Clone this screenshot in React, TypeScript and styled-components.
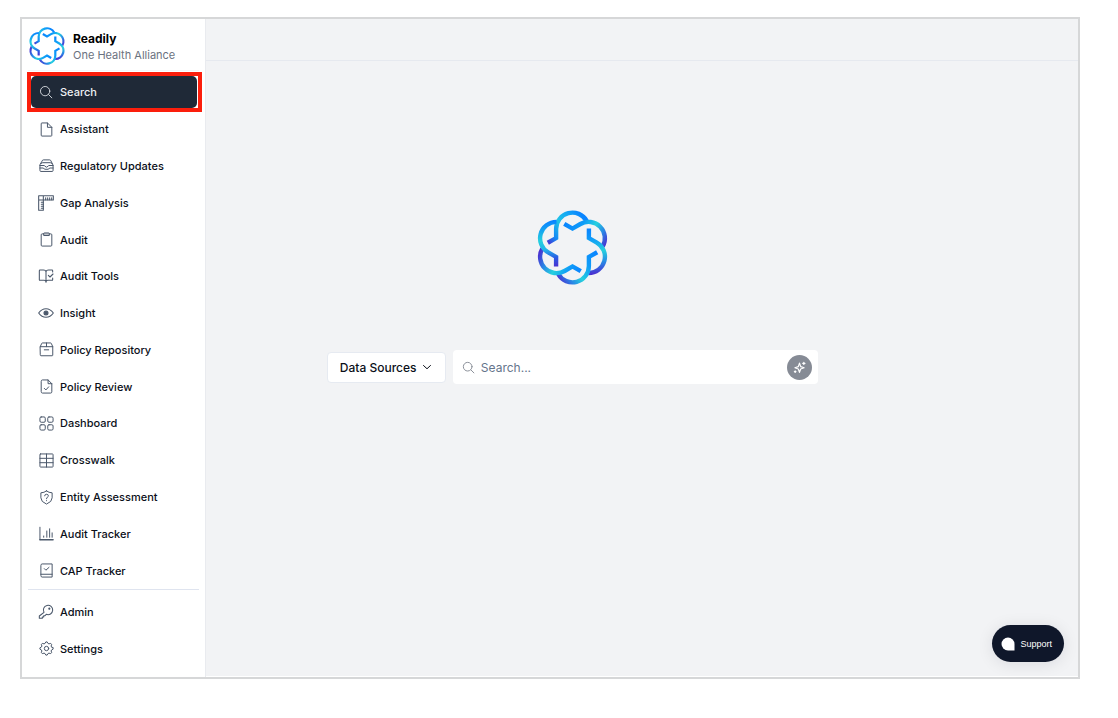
import React from "react";
import styled, { createGlobalStyle } from "styled-components";

const GlobalStyle = createGlobalStyle`
  *, *::before, *::after { box-sizing: border-box; }
  body {
    margin: 0;
    background: #ffffff;
    color: #0b0f19;
    font-family: Inter, "Liberation Sans", sans-serif;
    -webkit-font-smoothing: antialiased;
  }
  button, input { font-family: inherit; }
`;

const Page = styled.div`
  display: flex;
  min-height: 100vh;
  padding: 17px 38px 39px 20px;
`;

const Frame = styled.div`
  position: relative;
  flex: 1;
  display: flex;
  border: 2px solid #d6d7d8;
  background: #ffffff;
`;

const Sidebar = styled.aside`
  display: flex;
  flex-direction: column;
  flex: 0 0 184px;
  border-right: 1px solid #e9ebef;
  background: #ffffff;
`;

const Brand = styled.header`
  display: flex;
  align-items: center;
  gap: 8px;
  height: 52px;
  margin: 0 6px;
  padding: 3px 0 0 1px;
  border-bottom: 1px solid #f5f6f8;
`;

const BrandText = styled.div`
  display: flex;
  flex-direction: column;
  padding-top: 2px;
`;

const BrandName = styled.strong`
  font-size: 12px;
  line-height: 16px;
  font-weight: 700;
  color: #000000;
`;

const BrandOrg = styled.span`
  font-size: 11px;
  line-height: 16px;
  color: #6b7280;
`;

const Nav = styled.nav`
  display: flex;
  flex-direction: column;
  flex: 1;
  padding-top: 3px;
`;

const NavList = styled.ul<{ $grow?: boolean }>`
  display: grid;
  grid-auto-rows: ${(p) => (p.$grow ? "1fr" : "37px")};
  align-items: center;
  flex: ${(p) => (p.$grow ? 1 : "none")};
  margin: 0;
  padding: 0 7px 0 9px;
  list-style: none;
`;

const NavDivider = styled.hr`
  width: auto;
  height: 1px;
  margin: 0 6px 3px;
  border: 0;
  background: #dfe4ef;
`;

const NavFoot = styled.div`
  padding-bottom: 10px;
`;

const NavItem = styled.li<{ $active?: boolean }>`
  height: 32px;
  padding-right: 1px;
  outline: ${(p) => (p.$active ? "4px solid #fb1e0c" : "none")};
`;

const NavLink = styled.a<{ $active?: boolean }>`
  display: flex;
  align-items: center;
  gap: 6px;
  height: 32px;
  padding: 0 7px;
  border-radius: 5px;
  background: ${(p) => (p.$active ? "#1f2937" : "transparent")};
  color: ${(p) => (p.$active ? "#eef0f3" : "#0b0f19")};
  font-size: 11px;
  font-weight: 500;
  text-decoration: none;
  white-space: nowrap;

  svg { color: ${(p) => (p.$active ? "#d5d9df" : "#4b586b")}; }
`;

const IconSlot = styled.span`
  display: grid;
  place-items: center;
  flex: 0 0 16px;
`;

const Main = styled.main`
  display: flex;
  flex-direction: column;
  flex: 1;
  min-width: 0;
  margin-bottom: 1px;
  background: #f2f3f5;
`;

const TopBar = styled.div`
  height: 42px;
  border-bottom: 1px solid #e6e9ef;
`;

const Hero = styled.section`
  display: flex;
  flex-direction: column;
  align-items: center;
  gap: 65px;
  padding: 149px 16% 0 0;
`;

const SearchForm = styled.form`
  display: flex;
  align-items: center;
  gap: 7px;
  width: 67%;
  min-width: 400px;
`;

const SourcesButton = styled.button`
  display: flex;
  align-items: center;
  justify-content: space-between;
  flex: 0 0 119px;
  height: 31px;
  padding: 0 12px;
  border: 1px solid #e6eaf1;
  border-radius: 4px;
  background: #ffffff;
  color: #0b0f19;
  font-size: 12px;
  font-weight: 500;
  white-space: nowrap;
`;

const SearchField = styled.label`
  display: flex;
  align-items: center;
  gap: 6px;
  flex: 1;
  min-width: 0;
  height: 34px;
  padding: 0 6px 0 9px;
  border-radius: 4px;
  background: #ffffff;
  color: #8a8f98;
`;

const SearchInput = styled.input`
  flex: 1;
  min-width: 0;
  padding: 0;
  border: 0;
  outline: 0;
  background: transparent;
  color: #0b0f19;
  font-size: 12px;

  &::placeholder { color: #64748b; opacity: 1; }
`;

const SparkleButton = styled.button`
  display: grid;
  place-items: center;
  width: 25px;
  height: 25px;
  padding: 0;
  border: 0;
  border-radius: 50%;
  background: #868b95;
  color: #ffffff;
`;

const SupportButton = styled.button`
  position: absolute;
  right: 14px;
  bottom: 15px;
  display: flex;
  align-items: center;
  gap: 5px;
  height: 37px;
  padding: 0 12px 0 9px;
  border: 0;
  border-radius: 19px;
  background: #0f172a;
  color: #ffffff;
  font-family: "Liberation Sans", Arial, sans-serif;
  font-size: 9px;
  box-shadow: 0 2px 16px rgba(15, 23, 42, 0.1);
`;

const STRANDS = [
  { x1: 84, y1: 135, x2: 190, y2: 55, stops: ["0 #4a2fd0", "0.22 #1488f5", "0.5 #22c4e6", "0.75 #14a8f4", "1 #0a84ff"] },
  { x1: 131, y1: 72, x2: 254, y2: 140, stops: ["0 #0a84ff", "0.35 #0f9cf8", "0.6 #26d0de", "0.8 #2888e6", "1 #4a2fd0"] },
  { x1: 205, y1: 88, x2: 215, y2: 222, stops: ["0 #0a84ff", "0.2 #0f98fa", "0.5 #26d0de", "0.75 #2888e6", "1 #4a2fd0"] },
  { x1: 228, y1: 158, x2: 113, y2: 240, stops: ["0 #0a84ff", "0.3 #0f9cf8", "0.58 #26d0de", "0.78 #2888e6", "1 #4a2fd0"] },
  { x1: 181, y1: 210, x2: 58, y2: 155, stops: ["0 #0a84ff", "0.25 #0f9cf8", "0.55 #26d0de", "0.78 #2888e6", "1 #4a2fd0"] },
  { x1: 107, y1: 200, x2: 90, y2: 66, stops: ["0 #4a2fd0", "0.2 #2a5ce4", "0.4 #22b4ea", "0.6 #26d0de", "1 #0a84ff"] },
];

const CENTER = { x: 156, y: 143 };

function point(x: number, y: number, turns: number) {
  const a = (turns * Math.PI) / 3;
  const dx = x - CENTER.x;
  const dy = y - CENTER.y;
  const px = CENTER.x + dx * Math.cos(a) - dy * Math.sin(a);
  const py = CENTER.y + dx * Math.sin(a) + dy * Math.cos(a);
  return `${px.toFixed(1)} ${py.toFixed(1)}`;
}

function strandPath(turns: number) {
  const p = (x: number, y: number) => point(x, y, turns);
  return `M${p(83, 129)}L${p(107.5, 115)}L${p(107.5, 88)}A48.5 48.5 0 0 1 ${p(198, 64)}`;
}

function Logo({ id, width, height }: { id: string; width: number; height: number }) {
  return (
    <svg width={width} height={height} viewBox="51 32 210 222" role="img" aria-label="Readily">
      <defs>
        {STRANDS.map((s, i) => (
          <linearGradient key={i} id={`${id}-${i}`} gradientUnits="userSpaceOnUse" x1={s.x1} y1={s.y1} x2={s.x2} y2={s.y2}>
            {s.stops.map((stop) => {
              const [offset, color] = stop.split(" ");
              return <stop key={stop} offset={offset} stopColor={color} />;
            })}
          </linearGradient>
        ))}
      </defs>
      {STRANDS.map((_, i) => (
        <path key={i} d={strandPath(i)} fill="none" stroke={`url(#${id}-${i})`} strokeWidth="13" />
      ))}
    </svg>
  );
}

function Icon({ children, size = 16, weight = 1.6 }: { children: React.ReactNode; size?: number; weight?: number }) {
  return (
    <svg
      width={size}
      height={size}
      viewBox="0 0 24 24"
      fill="none"
      stroke="currentColor"
      strokeWidth={weight}
      strokeLinecap="round"
      strokeLinejoin="round"
      aria-hidden="true"
    >
      {children}
    </svg>
  );
}

const magnifier = (
  <>
    <circle cx="10.500" cy="10.500" r="8" />
    <path d="M16.400 16.400 22 22" />
  </>
);

interface Item {
  label: string;
  icon: React.ReactNode;
  size?: number;
}

const MAIN_ITEMS: Item[] = [
  { label: "Search", size: 14, icon: magnifier },
  {
    label: "Assistant",
    size: 15,
    icon: <path d="M3.500 2.500a1 1 0 0 1 1-1h9l7 7V21.500a1 1 0 0 1-1 1h-15a1 1 0 0 1-1-1zM13.500 1.500v7h7" />,
  },
  {
    label: "Regulatory Updates",
    size: 15,
    icon: (
      <>
        <path d="M1.500 11.500v8.500a1.500 1.500 0 0 0 1.500 1.500h18a1.500 1.500 0 0 0 1.500-1.500v-8.500L19 4.500q-.5-1.500-2-1.500H7q-1.500 0-2 1.500z" />
        <path d="M1.500 12h6.500q1 0 1.500 1.200 2.500 3 5 0 .5-1.200 1.500-1.200h6.500M3 9Q3.500 7.500 6 7.500h12q2.500 0 3 1.500M1.500 16h5l3 2h5l3-2h5" />
      </>
    ),
  },
  {
    label: "Gap Analysis",
    icon: (
      <>
        <path d="M1 1h22v6.500H8v15.500H1zM8 7.500V1M1 7.500h7" />
        <path d="M11.500 4v3M14.500 4v3M17.500 4v3M20.500 4v3M5 11h3M5 14h3M5 17h3M5 20h3" />
      </>
    ),
  },
  {
    label: "Audit",
    size: 15,
    icon: (
      <>
        <path d="M7.500 3H5Q3.500 3 3.500 4.500v16.500Q3.500 22.500 5 22.500h14q1.500 0 1.500-1.500V4.500Q20.500 3 19 3h-2.500" />
        <path d="M7.500 5V2.500Q7.500 1.500 8.500 1.500h7q1 0 1 1V5z" fill="currentColor" fillOpacity=".35" />
      </>
    ),
  },
  {
    label: "Audit Tools",
    icon: (
      <path d="M12 5.500v16M22 6V4q0-1-1-1h-5q-4 0-4 3Q12 3 8 3H3Q2 3 2 4v13.500q0 1 1 1h6q3 0 3 3 0-3 3-3h6q1 0 1-1V15M15.500 11l2.500 2.500 4.500-4.500" />
    ),
  },
  {
    label: "Insight",
    icon: (
      <>
        <path d="M1 12Q5.500 5.500 12 5.500t11 6.500q-4.500 6.500-11 6.500T1 12z" />
        <circle cx="12" cy="12" r="3" fill="currentColor" />
      </>
    ),
  },
  {
    label: "Policy Repository",
    size: 15,
    icon: <path d="M2 7.500 4 3q.4-1.500 1.500-1.500h13q1.100 0 1.500 1.500l2 4.500v13.500q0 1-1 1H3q-1 0-1-1zM2 7.500h20M12 1.500v6M8.500 12.500h7" />,
  },
  {
    label: "Policy Review",
    size: 15,
    icon: <path d="M3.500 3.500q0-2 2-2h9l6 6V20.500q0 2-2 2h-13q-2 0-2-2zM14.500 1.500v6h6M8.500 15l2.500 2.500 4.500-5" />,
  },
  {
    label: "Dashboard",
    size: 15,
    icon: (
      <>
        <rect x="1.500" y="1.500" width="8.500" height="8.500" rx="2" />
        <rect x="14" y="1.500" width="8.500" height="8.500" rx="2" />
        <rect x="1.500" y="14" width="8.500" height="8.500" rx="2" />
        <rect x="14" y="14" width="8.500" height="8.500" rx="2" />
      </>
    ),
  },
  {
    label: "Crosswalk",
    size: 15,
    icon: (
      <>
        <rect x="1.500" y="1.500" width="21" height="21" rx="1" />
        <path d="M1.500 8.500h21M1.500 15.500h21M12 1.500v21" />
      </>
    ),
  },
  {
    label: "Entity Assessment",
    size: 15,
    icon: (
      <>
        <path d="M12 1.500q4 3 9 3v8q0 6.500-9 10-9-3.500-9-10v-8q5 0 9-3z" />
        <path d="M9 9.300Q9.200 6.800 12 6.800t3 2.500q0 1.300-1.600 2.300T12 14M12 17v.2" />
      </>
    ),
  },
  {
    label: "Audit Tracker",
    size: 15,
    icon: (
      <>
        <path d="M1.500 2v20M7.500 18v-2M12.500 18V8M17 18V4.500M21 18v-7" />
        <path d="M1.500 22H22.500" strokeWidth="2.400" />
      </>
    ),
  },
  {
    label: "CAP Tracker",
    size: 15,
    icon: <path d="M3 3.500q0-2 2-2h16v21H5q-2 0-2-2zM3 18h18M8.500 9l2.500 2.500 5-4.500" />,
  },
];

const gear = Array.from({ length: 32 }, (_, i) => {
  const angle = ((i - 0.5) / 32) * Math.PI * 2;
  const radius = i % 4 < 2 ? 10.6 : 8.4;
  return `${i ? "L" : "M"}${(12 + radius * Math.cos(angle)).toFixed(2)} ${(12 + radius * Math.sin(angle)).toFixed(2)}`;
}).join("");

const FOOT_ITEMS: Item[] = [
  {
    label: "Admin",
    icon: (
      <>
        <path d="M9 12.500A7 7 0 1 1 12.500 15.500L10.500 17.500H8.500v2H6.500v2H2v-3.500z" />
        <circle cx="17" cy="7" r=".8" fill="currentColor" />
      </>
    ),
  },
  {
    label: "Settings",
    size: 15,
    icon: (
      <>
        <path d={`${gear}Z`} />
        <circle cx="12" cy="12" r="3.500" />
      </>
    ),
  },
];

function Entry({ label, icon, size, active }: Item & { active?: boolean }) {
  return (
    <NavItem $active={active}>
      <NavLink href="#" $active={active} aria-current={active ? "page" : undefined}>
        <IconSlot>
          <Icon size={size}>{icon}</Icon>
        </IconSlot>
        {label}
      </NavLink>
    </NavItem>
  );
}

export default function App() {
  return (
    <Page>
      <GlobalStyle />
      <Frame>
        <Sidebar>
          <Brand>
            <Logo id="brand" width={36} height={38} />
            <BrandText>
              <BrandName>Readily</BrandName>
              <BrandOrg>One Health Alliance</BrandOrg>
            </BrandText>
          </Brand>
          <Nav aria-label="Main">
            <NavList $grow>
              {MAIN_ITEMS.map((item, i) => (
                <Entry key={item.label} {...item} active={i === 0} />
              ))}
            </NavList>
            <NavDivider />
            <NavFoot>
              <NavList>
                {FOOT_ITEMS.map((item) => (
                  <Entry key={item.label} {...item} />
                ))}
              </NavList>
            </NavFoot>
          </Nav>
        </Sidebar>
        <Main>
          <TopBar />
          <Hero>
            <Logo id="hero" width={71} height={75} />
            <SearchForm onSubmit={(e) => e.preventDefault()}>
              <SourcesButton type="button" aria-haspopup="listbox">
                Data Sources
                <Icon size={12} weight={2}>
                  <path d="M5 9l7 6.500L19 9" />
                </Icon>
              </SourcesButton>
              <SearchField>
                <Icon size={13} weight={1.8}>{magnifier}</Icon>
                <SearchInput type="text" placeholder="Search..." aria-label="Search" />
                <SparkleButton type="submit" aria-label="Ask with AI">
                  <Icon size={13} weight={2.2}>
                    <path d="M12 4l2.200 6.300L20.500 12.500l-6.300 2.200L12 21l-2.200-6.300L3.500 12.500l6.300-2.200z" />
                    <path d="M20 2.500v4M18 4.500h4M4 18v3M2.500 19.500h3" />
                  </Icon>
                </SparkleButton>
              </SearchField>
            </SearchForm>
          </Hero>
        </Main>
        <SupportButton type="button">
          <svg width="14" height="14" viewBox="0 0 14 14" aria-hidden="true">
            <path d="M7 .5A6.500 6.500 0 0 0 7 13.500H13.500V7A6.500 6.500 0 0 0 7 .5z" fill="#ffffff" />
          </svg>
          Support
        </SupportButton>
      </Frame>
    </Page>
  );
}
